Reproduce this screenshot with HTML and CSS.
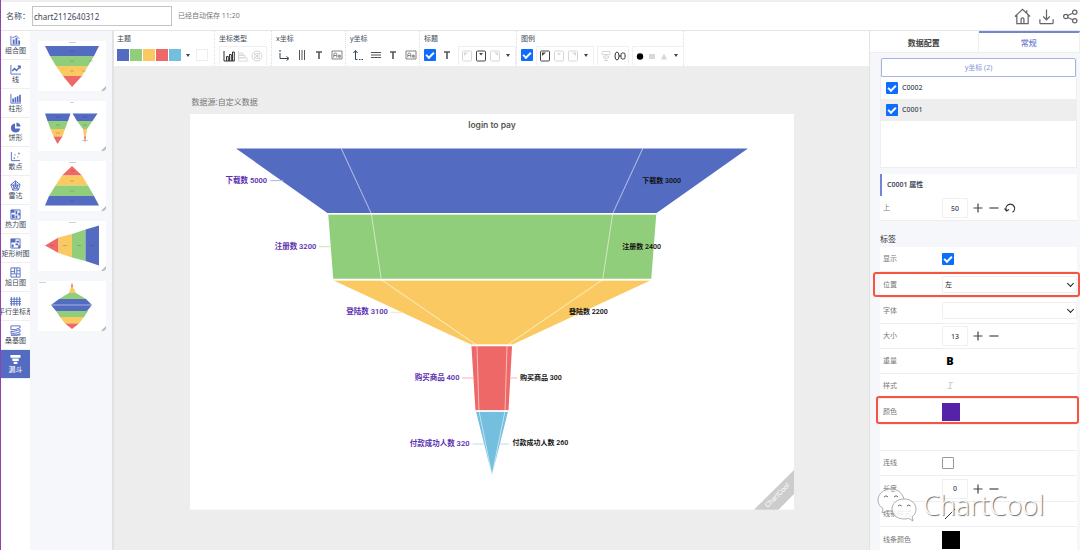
FILE: index.html
```html
<!DOCTYPE html>
<html lang="zh-CN">
<head>
  <meta charset="UTF-8">
  <meta name="viewport" content="width=device-width, initial-scale=1">
  <title>ChartCool</title>
  <link rel="stylesheet" href="styles.css">
</head>
<body>

  <!-- Shared icons -->
  <svg class="sprite" aria-hidden="true">
    <symbol id="i-text" viewBox="0 0 12 12"><path d="M3 3h6M6 3v7" stroke="#555" stroke-width="1.6" fill="none"/></symbol>
    <symbol id="i-label" viewBox="0 0 12 12"><path d="M1 2h10v8h-10zM2.8 8.5V5.5q0-1.500 1.500-1.500t1.500 1.500v3M3 6.500h2.600M9 6v2.500M9.200 7.200a1 1.200 0 1 1-2 0a1 1.200 0 1 1 2 0" stroke="#666" stroke-width=".8" fill="none"/></symbol>
    <symbol id="i-pos" viewBox="0 0 12 12"><rect x="1.500" y="1" width="9" height="10" rx="1" fill="none" stroke="currentColor"/><path d="M4 3h4L6 5.500z" fill="currentColor"/></symbol>
    <symbol id="i-pos-l" viewBox="0 0 12 12"><rect x="1.500" y="1" width="9" height="10" rx="1" fill="none" stroke="currentColor"/><path d="M3 2.500h4L3 6z" fill="currentColor"/></symbol>
    <symbol id="i-pos-r" viewBox="0 0 12 12"><rect x="1.500" y="1" width="9" height="10" rx="1" fill="none" stroke="currentColor"/><path d="M9 2.500H5L9 6z" fill="currentColor"/></symbol>
    <symbol id="i-plus" viewBox="0 0 12 12"><path d="M1.500 6h9M6 1.500v9" stroke="#444" stroke-width="1.200"/></symbol>
    <symbol id="i-minus" viewBox="0 0 12 12"><path d="M1.500 6h9" stroke="#444" stroke-width="1.200"/></symbol>
  </svg>

  <header class="topbar">
    <label class="topbar-label" for="chartName">名称：</label>
    <input class="name-input" id="chartName" type="text" value="chart2112640312">
    <span class="save-state">已经自动保存 11:20</span>
    <div class="topbar-actions">
      <button type="button" aria-label="首页"><svg viewBox="0 0 18 18"><path d="M1 9l8-7.500L17 9M3 7.500V16.500h12V7.500M7.500 16.500v-5q0-1 1.500-1t1.500 1v5M13.500 2.500v2.500" /></svg></button>
      <button type="button" aria-label="下载"><svg viewBox="0 0 18 18"><path d="M9 1.500v11M5.500 9L9 12.500 12.500 9M2 12v3.500q0 1 1 1h12q1 0 1-1V12"/></svg></button>
      <button type="button" aria-label="分享"><svg viewBox="0 0 18 18"><circle cx="4" cy="9" r="2.300"/><circle cx="13.500" cy="4.500" r="2.300"/><circle cx="13.500" cy="13.500" r="2.300"/><path d="M6 8l5.300-2.500M6 10l5.300 2.500"/></svg></button>
    </div>
  </header>

  <div class="workspace">

    <!-- Chart types -->
    <nav class="types">
      <a href="#"><svg viewBox="0 0 12 12"><path d="M1 1v10h10"/><path class="fill" d="M3 5h2v5H3zM6 3h2v7H6zM9 6h2v4H9z"/><path d="M2.500 3L5 2l2-1 3 3"/></svg>组合图</a>
      <a href="#"><svg viewBox="0 0 12 12"><path d="M1 1v10h11"/><path class="bold" d="M2.500 7.500L5 5l2 2 4-4M8.500 2.500H11V5"/></svg>线</a>
      <a href="#"><svg viewBox="0 0 12 12"><path d="M1 1v10h11"/><path class="fill" d="M2.500 6h1.800v4H2.500zM5 4.500h1.800V10H5zM7.500 3.500h1.800V10H7.500zM10 2h1.800v8H10z"/></svg>柱形</a>
      <a href="#"><svg viewBox="0 0 12 12"><path class="fill" d="M5.500 1.500V7H11A5 5 0 1 1 5.500 1.500z"/><path class="fill" d="M7 .5A5 5 0 0 1 11.500 5H7z"/></svg>饼形</a>
      <a href="#"><svg viewBox="0 0 12 12"><path d="M1.500 1v9.500H11"/><path class="fill" d="M4 7h1.500v1.500H4zM5 3.500h1V5H5zM8 6h1v1H8zM9 2h1.500v1.500H9z"/></svg>散点</a>
      <a href="#"><svg viewBox="0 0 12 12"><path d="M6 1l5 4-2 6H3L1 5zM6 3.500l2.600 2-1 3.500H4.400l-1-3.500zM6 1v5.500l5-1.500M6 6.500L9 11M6 6.500L3 11M6 6.500L1 5"/></svg>雷达</a>
      <a href="#"><svg viewBox="0 0 12 12"><path d="M1 1h10v10H1z"/><path class="fill" d="M1 1h4v3H1zM6 2h2v4H6zM9 4h2v3H9zM2 6h3v4H2zM6 7h2v3H6z"/></svg>热力图</a>
      <a href="#"><svg viewBox="0 0 12 12"><path d="M1 1h10v10H1z"/><path class="fill" d="M1 1h5v4H1zM7 3h3v2H7zM2 7h2v3H2zM6 6h3v2H6zM9 8h2v3H9z"/></svg>矩形树图</a>
      <a href="#"><svg viewBox="0 0 12 12"><path d="M1 1h10v10H1zM1 5h4M5 1v6M7.500 1v6M1 7.500h10M7 7.500V11M7.500 4H11"/></svg>旭日图</a>
      <a href="#"><svg viewBox="0 0 12 12"><path d="M1.500 1v10M4.500 1v10M7.500 1v10M10.500 1v10M0 3.500h12M0 6h12M0 8.500h12"/></svg>平行坐标系</a>
      <a href="#"><svg viewBox="0 0 12 12"><path d="M1 1h10v2L6 5H1zM1 7h3l7-2v2.500L6 9H1zM1 11h6l4-1.500V11z"/></svg>桑基图</a>
      <a href="#" class="active"><svg viewBox="0 0 12 12"><path class="fill" d="M.5 1h11v3H.5zM2.500 5h7v2.500h-7zM4 8.500h4V11H4z"/></svg>漏斗</a>
    </nav>

    <!-- Chart templates -->
    <aside class="templates">
      <button type="button" aria-label="漏斗图">
        <svg viewBox="0 0 68 50">
          <path class="c1" d="M7 5h54l-5 10H12z"/><path class="c2" d="M12 15h44l-6 10H18z"/><path class="c3" d="M18 25h32l-6 10H25z"/><path class="c4" d="M25 35h19L34 46z"/>
          <path class="mark" d="M31 1.500h7M32 10h4M32 20h4M32 30h4M51 20h4M44 30h4"/><path class="corner" d="M63 50l5-5v3l-2 2z"/>
        </svg>
      </button>
      <button type="button" aria-label="对比漏斗图">
        <svg viewBox="0 0 68 50">
          <path class="c1" d="M7 12.500h25.500L30 20H9.500z"/><path class="c2" d="M9.500 20H30l-3 8H12.500z"/><path class="c3" d="M12.500 28H27l-2.500 7.500h-9z"/><path class="c4" d="M15.500 35.500h9l-5 7.500z"/>
          <path class="c1" d="M34.500 12.500h25l-5 7.500H39z"/><path class="c2" d="M39 20h15.500L49 28h-4z"/><path class="c3" d="M45 28h4l-1 7.500h-2z"/><path class="c4" d="M46 35.500h2L47 42z"/>
          <path class="mark" d="M32 1.500h4M18 16h4M18 24h4M18 32h4M45 16h4M45 24h4M44 39.500h6"/><path class="corner" d="M63 50l5-5v3l-2 2z"/>
        </svg>
      </button>
      <button type="button" aria-label="金字塔图">
        <svg viewBox="0 0 68 50">
          <path class="c4" d="M34 5l10 9.500H24z"/><path class="c3" d="M24 14.500h20l6 10H17.500z"/><path class="c2" d="M17.500 24.500H50L56 35H11z"/><path class="c1" d="M11 35h45l5 9.500H7z"/>
          <path class="mark" d="M31 1.500h7M33 10h3M32 20h4M32 30h4M32 40h4"/><path class="corner" d="M63 50l5-5v3l-2 2z"/>
        </svg>
      </button>
      <button type="button" aria-label="横向漏斗图">
        <svg viewBox="0 0 68 50">
          <path class="c4" d="M7 24.500l13.500-8V32z"/><path class="c3" d="M20.500 16.500L34 13v23.500L20.500 32z"/><path class="c2" d="M34 13l13.500-4.500V40L34 36.500z"/><path class="c1" d="M47.500 8.500L61 4.500v40L47.500 40z"/>
          <path class="mark" d="M31 1.500h7M12 24.500h4M25 24.500h4M39 24.500h4M52 24.500h4"/><path class="corner" d="M63 50l5-5v3l-2 2z"/>
        </svg>
      </button>
      <button type="button" aria-label="双向漏斗图">
        <svg viewBox="0 0 68 50">
          <path class="c4" d="M34 1l1 5h-2z"/><path class="c3" d="M33 6h2l3 6h-7z"/><path class="c2" d="M31 12h7l10 6H21z"/><path class="c1" d="M21 18h27l6 6-5 6H18l-5-6z"/><path class="c2" d="M18 30h32l-4 6H22z"/><path class="c3" d="M22 36h24l-5 6.500H27z"/><path class="c4" d="M27 42.500h14L34 48z"/>
          <path class="mark" d="M1 1.500h7"/><path class="line" d="M13.500 24h41"/><path class="corner" d="M63 50l5-5v3l-2 2z"/>
        </svg>
      </button>
    </aside>

    <!-- Toolbar and canvas -->
    <main class="editor">
      <div class="toolbar">
        <section class="group theme">
          <h2>主题</h2>
          <div class="tools">
            <button type="button" class="swatch s1" aria-label="蓝"></button>
            <button type="button" class="swatch s2" aria-label="绿"></button>
            <button type="button" class="swatch s3" aria-label="黄"></button>
            <button type="button" class="swatch s4" aria-label="红"></button>
            <button type="button" class="swatch s5" aria-label="青"></button>
            <button type="button" class="caret" aria-label="更多主题"></button>
            <button type="button" class="swatch blank" aria-label="背景"></button>
          </div>
        </section>
        <section class="group axis-type">
          <h2>坐标类型</h2>
          <div class="tools">
            <div class="box">
              <button type="button" aria-label="直角坐标"><svg viewBox="0 0 12 12"><path d="M1 1v10h10.500M3.500 11V6.500h1.800V11M6.500 11V4.500h1.800V11M9.500 11V2h1.800v9" fill="none" stroke="#333"/></svg></button>
              <button type="button" class="off" aria-label="横向坐标"><svg viewBox="0 0 12 12"><path d="M1.500 1v10h10M2 3h4v2H2M2 5.500h6v2H2M2 8h8v2" fill="none" stroke="currentColor"/></svg></button>
              <button type="button" class="off" aria-label="极坐标"><svg viewBox="0 0 12 12"><g fill="none" stroke="currentColor"><circle cx="6" cy="6" r="5"/><circle cx="6" cy="6" r="2.500"/><path d="M2.500 2.500l7 7M9.500 2.500l-7 7"/></g></svg></button>
            </div>
          </div>
        </section>
        <section class="group axis">
          <h2>x坐标</h2>
          <div class="tools">
            <button type="button" aria-label="x轴线"><svg viewBox="0 0 12 12"><path d="M2 1v2M2 4v5.500h8M8.500 7.500l2.500 2-2.500 2" fill="none" stroke="#345"/></svg></button>
            <button type="button" aria-label="x网格线"><svg viewBox="0 0 12 12"><path d="M3.500 1v10M6 1v10M8.500 1v10" stroke="#555"/></svg></button>
            <button type="button" aria-label="x标题"><svg><use href="#i-text"/></svg></button>
            <button type="button" aria-label="x标签"><svg><use href="#i-label"/></svg></button>
          </div>
        </section>
        <section class="group axis">
          <h2>y坐标</h2>
          <div class="tools">
            <button type="button" aria-label="y轴线"><svg viewBox="0 0 12 12"><path d="M3.500 2v8.500h2M7 10.500h1.500M9.500 10.500H11M1.500 4l2-2.500 2 2.500" fill="none" stroke="#345"/></svg></button>
            <button type="button" aria-label="y网格线"><svg viewBox="0 0 12 12"><path d="M1 3.500h10M1 6h10M1 8.500h10" stroke="#555"/></svg></button>
            <button type="button" aria-label="y标题"><svg><use href="#i-text"/></svg></button>
            <button type="button" aria-label="y标签"><svg><use href="#i-label"/></svg></button>
          </div>
        </section>
        <section class="group title">
          <h2><label for="showTitle">标题</label></h2>
          <div class="tools">
            <input type="checkbox" id="showTitle" checked>
            <button type="button" aria-label="标题文字"><svg><use href="#i-text"/></svg></button>
            <div class="box">
              <button type="button" class="off" aria-label="左"><svg><use href="#i-pos-l"/></svg></button>
              <button type="button" aria-label="中"><svg><use href="#i-pos"/></svg></button>
              <button type="button" class="off" aria-label="右"><svg><use href="#i-pos-r"/></svg></button>
              <button type="button" class="caret" aria-label="更多位置"></button>
            </div>
          </div>
        </section>
        <section class="group legend">
          <h2><label for="showLegend">图例</label></h2>
          <div class="tools">
            <input type="checkbox" id="showLegend" checked>
            <div class="box">
              <button type="button" aria-label="左"><svg><use href="#i-pos-l"/></svg></button>
              <button type="button" class="off" aria-label="中"><svg><use href="#i-pos"/></svg></button>
              <button type="button" class="off" aria-label="右"><svg><use href="#i-pos-r"/></svg></button>
              <button type="button" class="caret" aria-label="更多位置"></button>
            </div>
            <div class="box pair">
              <button type="button" class="off" aria-label="纵向"><svg viewBox="0 0 12 12"><path d="M2 1.500h8v3H2zM3.500 6h5v2h-5zM6 8v3M4 10.500h4M6 4.500V6" fill="none" stroke="currentColor"/></svg></button>
              <button type="button" aria-label="横向"><svg viewBox="0 0 12 12"><path d="M3 2Q1 2 1 6t2 4M3 2q2 0 2 4t-2 4M5 6h2" fill="none" stroke="#333"/><rect x="7" y="3" width="4" height="6" rx="1.500" fill="none" stroke="#333"/></svg></button>
            </div>
            <div class="box shapes">
              <button type="button" aria-label="圆形"><svg viewBox="0 0 12 12"><circle cx="6" cy="6.500" r="3.200" fill="#000"/></svg></button>
              <button type="button" class="off" aria-label="方形"><svg viewBox="0 0 12 12"><path d="M3 4h6v5H3z" fill="currentColor"/></svg></button>
              <button type="button" class="off" aria-label="三角形"><svg viewBox="0 0 12 12"><path d="M6 3.500L9 9.500H3z" fill="currentColor"/></svg></button>
              <button type="button" class="caret" aria-label="更多形状"></button>
            </div>
          </div>
        </section>
      </div>

      <div class="canvas">
        <p class="source">数据源:自定义数据</p>
        <svg class="chart" viewBox="0 0 1206 790" role="img" aria-label="login to pay">
          <rect width="1206" height="790" fill="#fff"/>
          <text class="chart-title" x="603" y="23">login to pay</text>

          <path class="c1" d="M92 69H1114L931 198H275z"/>
          <path class="c2" d="M276 200H931L921 329H286z"/>
          <path class="c3" d="M286 332H920L643 461H562z"/>
          <path class="c4" d="M562 463H643L636 592H570z"/>
          <path class="c5" d="M571 594H635L603 721z"/>
          <!-- inner funnel -->
          <path class="inner" d="M302 69L362 199L382 331L573 462L577 593L603 721L629 593L633 462L824 331L844 199L904 69"/>
          <path class="split" d="M275 199H931M286 331H921M562 462H643M570 593H636"/>

          <g class="leader">
            <path class="l1" d="M160 133h26"/>
            <path class="l2" d="M257 265h24"/>
            <path class="l3" d="M401 396h24"/>
            <path class="l4" d="M543 527h24M638 527h15"/>
            <path class="l5" d="M564 659h24M619 659h18"/>
          </g>

          <g class="labels left">
            <text x="154" y="134">下载数 5000</text>
            <text x="252" y="265">注册数 3200</text>
            <text x="395" y="396">登陆数 3100</text>
            <text x="538" y="528">购买商品 400</text>
            <text x="558" y="659">付款成功人数 320</text>
          </g>
          <g class="labels right">
            <text x="903" y="134">下载数 3000</text>
            <text x="863" y="265">注册数 2400</text>
            <text x="757" y="396">登陆数 2200</text>
            <text x="659" y="527">购买商品 300</text>
            <text x="644" y="658">付款成功人数 260</text>
          </g>

          <path class="ribbon" d="M1126 790L1206 711V759L1175 790z"/>
          <text class="ribbon-text" transform="translate(1173 762) rotate(-45)">ChartCool</text>
        </svg>
      </div>
    </main>

    <!-- Settings -->
    <aside class="panel">
      <div class="tabs">
        <button type="button">数据配置</button>
        <button type="button" class="active">常规</button>
      </div>
      <div class="panel-body">
        <div class="series">
          <button type="button" class="series-head">y坐标 (2)</button>
          <label><input type="checkbox" checked>C0002</label>
          <label class="selected"><input type="checkbox" checked>C0001</label>
        </div>

        <h3 class="props-title">C0001 属性</h3>
        <div class="row stepper">
          <label for="top">上</label>
          <input type="text" id="top" value="50">
          <button type="button" aria-label="增加"><svg><use href="#i-plus"/></svg></button>
          <button type="button" aria-label="减少"><svg><use href="#i-minus"/></svg></button>
          <button type="button" aria-label="重置"><svg viewBox="0 0 12 12"><path d="M2.500 8.500A4.300 4.300 0 1 1 8.500 10.200M.5 6.500l2 2.500 2.500-1.500" fill="none" stroke="#333" stroke-width="1.200"/></svg></button>
        </div>

        <h3 class="section-title">标签</h3>
        <div class="row"><label for="show">显示</label><input type="checkbox" id="show" checked></div>
        <div class="row tall marked wide"><label for="position">位置</label><select id="position"><option>左</option></select></div>
        <div class="row tall"><label for="font">字体</label><select id="font"><option></option></select></div>
        <div class="row stepper">
          <label for="size">大小</label>
          <input type="text" id="size" value="13">
          <button type="button" aria-label="增加"><svg><use href="#i-plus"/></svg></button>
          <button type="button" aria-label="减少"><svg><use href="#i-minus"/></svg></button>
        </div>
        <div class="row"><label for="bold">重量</label><button type="button" class="bold-btn" id="bold">B</button></div>
        <div class="row"><label for="italic">样式</label><button type="button" class="italic-btn" id="italic">I</button></div>
        <div class="row tall marked"><label for="color">颜色</label><button type="button" class="color purple" id="color"></button></div>
        <div class="row tall"></div>
        <div class="row"><label for="link">连线</label><input type="checkbox" id="link"></div>
        <div class="row tall stepper">
          <label for="length">长度</label>
          <input type="text" id="length" value="0">
          <button type="button" aria-label="增加"><svg><use href="#i-plus"/></svg></button>
          <button type="button" aria-label="减少"><svg><use href="#i-minus"/></svg></button>
        </div>
        <div class="row"><label for="lineStyle">线条样式</label><button type="button" class="line-btn" id="lineStyle" aria-label="线条样式"><svg viewBox="0 0 12 12"><path d="M1 11L11 1" stroke="#333"/></svg></button></div>
        <div class="row tall"><label for="lineColor">线条颜色</label><button type="button" class="color black" id="lineColor"></button></div>
      </div>
    </aside>
  </div>

  <div class="watermark">
    <svg viewBox="0 0 40 34">
      <path d="M14 1C6.500 1 1 6 1 12c0 4 2 6.500 5 8.500L5 25l5-2.500c2 .5 4 .5 6 .3M27 11C25.500 5 20.500 1 14 1" />
      <path d="M27 11c-7 0-12 4.500-12 10s5 10 12 10c1.500 0 3-.2 4.500-.7L36 33l-1-4c2.500-2 4-4.500 4-8 0-5.500-5-10-12-10z"/>
      <path class="eyes" d="M7 9q2-2.500 4 0M17 9q2-2.500 4 0M21 18q1.800-2 3.600 0M30 18q1.800-2 3.600 0"/>
    </svg>
    <span>ChartCool</span>
  </div>

</body>
</html>
```
FILE: styles.css
```css
*,
*::before,
*::after {
  box-sizing: border-box;
}

body {
  margin: 0;
  height: 100vh;
  display: flex;
  flex-direction: column;
  position: relative;
  overflow: hidden;
  border-left: 1px solid #8e44ad;
  background: #fff;
  color: #3c4858;
  font-family: "Noto Sans", "Noto Sans CJK SC", sans-serif;
  font-size: 7px;
  line-height: 10px;
}

h2, h3, p {
  margin: 0;
  font-size: 7px;
  font-weight: 400;
}

button {
  display: flex;
  align-items: center;
  justify-content: center;
  padding: 0;
  border: 0;
  background: none;
  color: #444;
  font: inherit;
  cursor: pointer;
}

input, select {
  font: inherit;
  color: inherit;
}

.sprite {
  position: absolute;
  width: 0;
  height: 0;
}

.c1 { fill: #536bc1; }
.c2 { fill: #91ce7b; }
.c3 { fill: #fac961; }
.c4 { fill: #ef6868; }
.c5 { fill: #73bfdd; }

input[type="checkbox"] {
  appearance: none;
  flex: none;
  width: 12px;
  height: 12px;
  margin: 0;
  border: 1px solid #999;
  border-radius: 1px;
  background: #fff;
}

input[type="checkbox"]:checked {
  border: 0;
  background: #0d6efd;
}

input[type="checkbox"]:checked::after {
  content: "";
  display: block;
  width: 8px;
  height: 5px;
  margin: 3px 2px;
  border: solid #fff;
  border-width: 0 0 2px 2px;
  transform: rotate(-45deg);
}

/* Top bar */
.topbar {
  flex: none;
  display: flex;
  align-items: center;
  height: 31px;
  padding: 0 1px 0 5px;
  border-top: 2px solid #eee;
  border-bottom: 1px solid #e6e6e6;
}

.topbar-label {
  width: 26px;
  font-size: 8px;
}

.name-input {
  width: 140px;
  height: 20px;
  padding: 0 1px;
  border: 1px solid #c4c4c4;
  font-size: 8px;
}

.save-state {
  margin-left: 6px;
  color: #777;
}

.topbar-actions {
  display: flex;
  gap: 7px;
  margin-left: auto;
}

.topbar-actions svg {
  width: 17px;
  height: 17px;
  fill: none;
  stroke: #666;
  stroke-width: 1.3;
}

.workspace {
  flex: 1;
  min-height: 0;
  display: flex;
}

/* Chart types */
.types {
  flex: none;
  width: 29px;
  overflow: hidden;
}

.types a {
  display: flex;
  flex-direction: column;
  align-items: center;
  justify-content: center;
  height: 29px;
  padding-top: 1px;
  border-bottom: 1px solid #eee;
  color: #3c4858;
  text-decoration: none;
  white-space: nowrap;
}

.types svg {
  width: 11px;
  height: 11px;
  fill: none;
  stroke: #536bc1;
}

.types .fill {
  fill: #536bc1;
  stroke: none;
}

.types .bold {
  stroke-width: 1.6;
}

.types .active {
  background: #536bc1;
  color: #fff;
}

.types .active .fill {
  fill: #fff;
}

/* Templates */
.templates {
  flex: none;
  display: flex;
  flex-direction: column;
  gap: 10px;
  width: 84px;
  padding: 10px 6px 0 8px;
  border-right: 2px solid #e2e2e4;
  background: #f6f7fa;
}

.templates button {
  background: #fff;
}

.templates svg {
  width: 100%;
}

.templates .mark {
  stroke: #333;
  stroke-opacity: .4;
  stroke-width: .6;
}

.templates .line {
  stroke: #fff;
  stroke-width: .5;
}

.corner {
  fill: #bbb;
}

/* Toolbar */
.editor {
  flex: 1;
  min-width: 0;
  display: flex;
  flex-direction: column;
}

.toolbar {
  flex: none;
  display: flex;
  height: 35px;
  background: #fff;
}

.group {
  flex: none;
  display: flex;
  flex-direction: column;
  padding: 3px 1px 0 4px;
  border-right: 1px dotted #ddd;
}

.tools {
  flex: 1;
  display: flex;
  align-items: center;
}

.theme { width: 101px; padding-left: 3px; }
.axis-type { width: 57px; }
.axis { width: 74px; }
.title { width: 97px; }
.legend { width: 167px; padding-right: 0; }

.tools svg {
  width: 12px;
  height: 12px;
}

.tools button {
  flex: none;
  width: 14px;
  height: 14px;
}

.tools .off {
  color: #d8d8d8;
}

.tools .swatch {
  width: 12px;
  height: 12px;
  margin-right: 1px;
}

.s1 { background: #536bc1; }
.s2 { background: #91ce7b; }
.s3 { background: #fac961; }
.s4 { background: #ef6868; }
.s5 { background: #73bfdd; }

.tools .blank {
  margin-left: 2px;
  border: 1px solid #eee;
}

.tools .caret {
  width: 12px;
}

.caret::after {
  content: "";
  border: solid transparent;
  border-width: 3px 2px 0;
  border-top-color: #345;
}

.axis .tools {
  justify-content: space-between;
  padding: 0 0 0 1px;
}

.title .tools > button {
  margin: 0 4px;
}

.box {
  display: flex;
  align-items: center;
  height: 19px;
  padding: 0 1px;
  border: 1px solid #f0f0f0;
  border-bottom: 0;
}

.axis-type .box {
  padding: 0 2px;
}

.legend .tools {
  gap: 3px;
}

.shapes button {
  width: 12px;
}

/* Canvas */
.canvas {
  flex: 1;
  min-height: 0;
  padding: 30px 10% 0;
  background: #ededed;
}

.source {
  padding: 0 2px;
  margin-bottom: 6px;
  color: #777;
  font-size: 8px;
  line-height: 12px;
}

.chart {
  display: block;
  width: 100%;
}

.chart text {
  font-family: Roboto, "Noto Sans CJK SC", sans-serif;
  font-weight: 600;
  dominant-baseline: middle;
}

.chart .chart-title {
  fill: #555;
  font-family: Inter, sans-serif;
  font-size: 17px;
  text-anchor: middle;
}

.chart .inner {
  fill: none;
  stroke: #fff;
  stroke-opacity: .55;
  stroke-width: 2;
}

.chart .split {
  stroke: #fff;
  stroke-width: 3;
}

.leader {
  fill: none;
  stroke-width: 2;
}

.l1 { stroke: #a9b5e0; }
.l2 { stroke: #c8e6bd; }
.l3 { stroke: #fce4b0; }
.l4 { stroke: #f7b3b3; }
.l5 { stroke: #b9dfee; }

.chart .left text {
  fill: #5b2fb0;
  font-size: 15px;
  text-anchor: end;
}

.chart .right text {
  fill: #111;
  font-size: 14px;
}

.ribbon {
  fill: #ccc;
}

.chart .ribbon-text {
  fill: #fff;
  font-size: 14px;
  font-weight: 400;
  text-anchor: middle;
}

/* Settings panel */
.panel {
  flex: none;
  width: 211px;
  overflow: hidden;
  border-left: 1px solid #e2e2e4;
  background: #f6f7fa;
}

.tabs {
  display: grid;
  grid-template-columns: 15fr 14fr;
  background: #fff;
  border-bottom: 1px solid #eee;
}

.tabs button {
  height: 21px;
  border-right: 1px solid #eee;
  border-top: 2px solid transparent;
  font-size: 8px;
  font-weight: 600;
}

.tabs .active {
  border-top-color: #7186d4;
  color: #6f83d2;
  font-weight: 500;
}

.panel-body {
  padding: 5px 3px 0 10px;
}

.series {
  height: 110px;
  border: 1px solid #eee;
  border-top: 0;
  background: #fff;
}

.series-head {
  width: 100%;
  height: 19px;
  border: 1px solid #a6b3e4;
  border-radius: 2px 2px 0 0;
  color: #7f91d8;
}

.series label {
  display: flex;
  align-items: center;
  gap: 4px;
  height: 22px;
  padding-left: 5px;
  font-weight: 500;
}

.series .selected {
  background: #eee;
}

.props-title {
  height: 22px;
  margin-top: 6px;
  padding-left: 5px;
  border-left: 2px solid #7186d4;
  background: #fff;
  font-weight: 600;
  line-height: 22px;
}

.section-title {
  margin: 12px 0 2px;
  color: #333;
  font-size: 8px;
  line-height: 12px;
}

.row {
  position: relative;
  display: flex;
  align-items: center;
  height: 25px;
  padding-left: 3px;
  border-bottom: 1px solid #eee;
  background: #fff;
}

.row.tall {
  height: 26px;
}

.row > label {
  width: 59px;
  color: #777;
}

.row select {
  appearance: none;
  flex: 1;
  height: 17px;
  padding: 0 2px;
  border: 1px solid #f0f0f0;
  border-radius: 0;
  background: #fff;
  color: #222;
  line-height: 12px;
}

.row:has(select)::after {
  content: "";
  position: absolute;
  right: 4px;
  top: 9px;
  width: 5px;
  height: 5px;
  border: solid #222;
  border-width: 0 1px 1px 0;
  transform: rotate(45deg);
}

.stepper input {
  width: 26px;
  height: 20px;
  margin-right: 2px;
  padding: 0;
  border: 1px solid #f0f0f0;
  text-align: center;
  font-weight: 500;
}

.stepper button {
  width: 16px;
}

.row svg {
  width: 12px;
  height: 12px;
}

.row .bold-btn {
  width: 16px;
  color: #000;
  font-size: 11px;
  font-weight: 900;
}

.row .italic-btn {
  width: 16px;
  color: #ccc;
  font-family: "Liberation Mono", monospace;
  font-size: 11px;
  font-style: italic;
}

.row .line-btn {
  width: 16px;
}

.color {
  width: 18px;
  height: 18px;
}

.purple { background: #5522a8; }
.black { background: #000; }

/* Highlight frame around a setting */
.marked::before {
  content: "";
  position: absolute;
  inset: -3px -2px 0 -4px;
  border: 2px solid #f8533f;
  border-radius: 3px;
  z-index: 1;
}

.marked.wide::before {
  inset: 0 -3px 0 -7px;
}

.watermark {
  position: absolute;
  right: 36px;
  bottom: 28px;
  display: flex;
  align-items: center;
  gap: 6px;
  color: #fff;
  font-family: "Open Sans", sans-serif;
  font-size: 27px;
  font-weight: 300;
  line-height: 34px;
  text-shadow: 1px 1px 1px #666;
  pointer-events: none;
}

.watermark svg {
  width: 40px;
  height: 34px;
  fill: #fff;
  fill-opacity: .85;
  stroke: #999;
  stroke-width: .8;
}

.watermark .eyes {
  fill: none;
  stroke: #444;
}
```
